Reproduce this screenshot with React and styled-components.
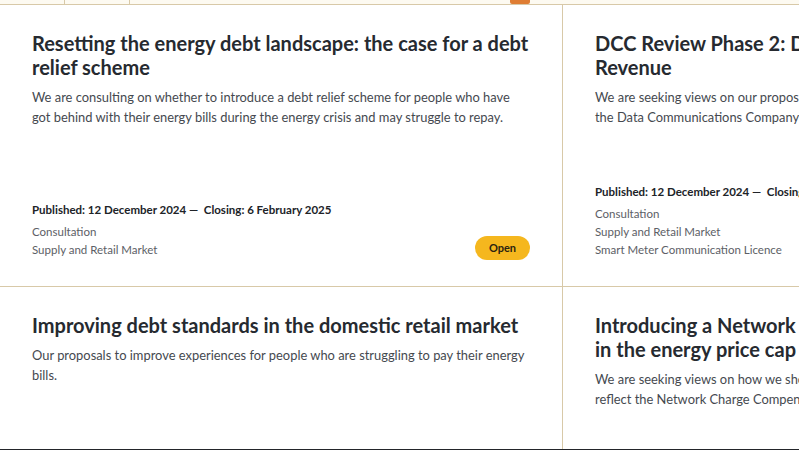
import styled, { createGlobalStyle } from "styled-components";

const GlobalStyle = createGlobalStyle`
  html, body {
    margin: 0;
    padding: 0;
    background: #ffffff;
  }
  body {
    font-family: "Lato", "Liberation Sans", sans-serif;
    color: #2b2f33;
  }
`;

const cards = [
  {
    title: "Resetting the energy debt landscape: the case for a debt relief scheme",
    summary:
      "We are consulting on whether to introduce a debt relief scheme for people who have got behind with their energy bills during the energy crisis and may struggle to repay.",
    published: "12 December 2024",
    closing: "6 February 2025",
    tags: ["Consultation", "Supply and Retail Market"],
    status: "Open",
  },
  {
    title: "DCC Review Phase 2: Determination of Baseline Margin Revenue",
    summary:
      "We are seeking views on our proposed determination of the allowed revenue for the\u00a0Data Communications Company (DCC) under the second phase of the review.",
    published: "12 December 2024",
    closing: "6 February 2025",
    tags: ["Consultation", "Supply and Retail Market", "Smart Meter Communication Licence"],
  },
  {
    title: "Improving debt standards in the domestic retail market",
    summary:
      "Our proposals to improve experiences for people who are struggling to pay their energy bills.",
  },
  {
    title: "Introducing a Network Charge Compensation allowance in the energy price cap",
    summary:
      "We are seeking views on how we should update the energy price cap methodology to reflect the Network Charge Compensation scheme.",
  },
];

const Page = styled.div`
  width: 799px;
  height: 450px;
  overflow: hidden;
  border-bottom: 1px solid #23252a;
  box-sizing: border-box;
  background: #fffdf7;
`;

const TabStrip = styled.div`
  display: flex;
  height: 4px;
  background: #fdfaf1;
  border-bottom: 1px solid #d8c9a8;
`;

const Tab = styled.div`
  width: ${(p) => p.$w}px;
  flex: none;
  border-right: 1px solid #d8c9a8;
  box-sizing: border-box;
`;

const TabFill = styled.div`
  flex: 1;
  display: flex;
  padding-left: 380px;
`;

const Indicator = styled.div`
  width: 20px;
  height: 4px;
  background: #df7d33;
  border-radius: 0 0 2px 2px;
`;

const Grid = styled.div`
  display: grid;
  grid-template-columns: 562px 562px;
  grid-auto-rows: 281px;
  background: #d8c9a8;
  gap: 1px;
  width: 1125px;
`;

const Card = styled.article`
  background: #ffffff;
  padding: 26px 32px 27px;
  display: flex;
  flex-direction: column;
  box-sizing: border-box;
  position: relative;
`;

const Title = styled.h3`
  margin: 0 0 8px;
  font-size: 20px;
  line-height: 24px;
  font-weight: 700;
  color: #262a30;
  width: 500px;
`;

const Summary = styled.p`
  margin: 0;
  font-size: 12.9px;
  line-height: 20px;
  color: #45494f;
  width: 498px;
`;

const Meta = styled.div`
  margin-top: auto;
  display: flex;
  flex-direction: column;
`;

const Dates = styled.div`
  font-size: 11.5px;
  line-height: 16px;
  font-weight: 700;
  color: #202328;
  margin-bottom: 5px;
  white-space: nowrap;
`;

const Tag = styled.div`
  font-size: 11.5px;
  line-height: 18px;
  color: #5c6066;
`;

const Badge = styled.span`
  position: absolute;
  right: 32px;
  bottom: 26px;
  background: #f5b71e;
  color: #2a2310;
  font-size: 11px;
  font-weight: 700;
  padding: 0 14px;
  height: 24px;
  line-height: 24px;
  border-radius: 12px;
`;

export default function App() {
  return (
    <Page>
      <GlobalStyle />
      <TabStrip>
        <Tab $w={65} />
        <Tab $w={65} />
        <TabFill>
          <Indicator />
        </TabFill>
      </TabStrip>
      <Grid>
        {cards.map((c) => (
          <Card key={c.title}>
            <Title>{c.title}</Title>
            <Summary>{c.summary}</Summary>
            {c.published && (
              <Meta>
                <Dates>
                  Published: {c.published} —&nbsp; Closing: {c.closing}
                </Dates>
                {c.tags.map((t) => (
                  <Tag key={t}>{t}</Tag>
                ))}
              </Meta>
            )}
            {c.status && <Badge>{c.status}</Badge>}
          </Card>
        ))}
      </Grid>
    </Page>
  );
}
